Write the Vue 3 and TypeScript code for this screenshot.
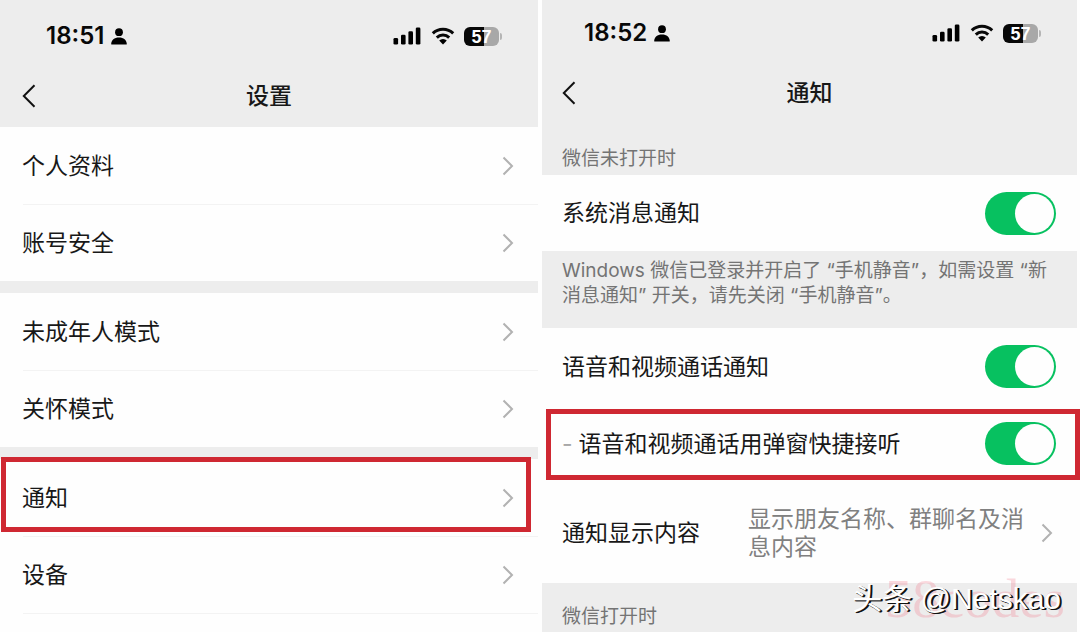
<script setup lang="ts">
import { ref } from 'vue'

interface SettingRow {
  label: string
  marked?: boolean
}

const groups: SettingRow[][] = [
  [{ label: '个人资料' }, { label: '账号安全' }],
  [{ label: '未成年人模式' }, { label: '关怀模式' }],
  [{ label: '通知', marked: true }, { label: '设备' }, { label: '' }],
]

const screens = [
  { id: 'settings', time: '18:51', title: '设置' },
  { id: 'notify', time: '18:52', title: '通知' },
]

const systemOn = ref(true)
const callOn = ref(true)
const popupOn = ref(true)
</script>

<template>
  <main class="board">
    <section v-for="s in screens" :key="s.id" class="phone" :class="s.id">
      <header class="top">
        <div class="status">
          <span class="time">{{ s.time }}</span>
          <svg class="person" viewBox="0 0 16 17" aria-hidden="true">
            <circle cx="8" cy="4.2" r="3.9" />
            <path d="M0.2 16C0.2 12 3.4 9.4 8 9.4s7.8 2.6 7.8 6.6q0 .6-.6.6H.8q-.6 0-.6-.6z" />
          </svg>
          <svg class="signal" viewBox="0 0 28 18" aria-hidden="true">
            <rect x="0.5" y="11" width="4.6" height="6.5" rx="1.3" />
            <rect x="8" y="7.8" width="4.6" height="9.7" rx="1.3" />
            <rect x="15.4" y="4.2" width="4.6" height="13.3" rx="1.3" />
            <rect x="22.8" y="0.5" width="4.6" height="17" rx="1.3" />
          </svg>
          <svg class="wifi" viewBox="0 0 24 18" aria-hidden="true">
            <path class="arc" d="M1.8 6.4a14.6 14.6 0 0 1 20.4 0" />
            <path class="arc" d="M5.8 10.6a8.9 8.9 0 0 1 12.4 0" />
            <path d="M8.2 13.6a5.5 5.5 0 0 1 7.6 0L12 17.6z" />
          </svg>
          <span class="battery"><b class="level">57</b><i class="cap"></i></span>
        </div>
        <div class="nav">
          <button class="back" type="button" aria-label="返回">
            <svg viewBox="0 0 14 24" aria-hidden="true"><path d="M12.5 1.2L1.8 12l10.7 10.8" /></svg>
          </button>
          <h1>{{ s.title }}</h1>
        </div>
      </header>

      <template v-if="s.id === 'settings'">
        <ul v-for="(g, gi) in groups" :key="gi" class="group">
          <li v-for="(r, ri) in g" :key="ri" class="item">
            <button v-if="r.label" type="button" class="row">
              <span>{{ r.label }}</span>
              <svg class="chev" viewBox="0 0 12 20" aria-hidden="true"><path d="M1.5 1.5L10 10l-8.5 8.5" /></svg>
            </button>
            <span v-if="r.marked" class="mark"></span>
          </li>
        </ul>
      </template>

      <template v-else>
        <h2 class="caption">微信未打开时</h2>
        <label class="row">
          <span>系统消息通知</span>
          <input v-model="systemOn" class="switch" type="checkbox" role="switch" />
        </label>
        <p class="note">Windows 微信已登录并开启了 “手机静音”，如需设置 “新消息通知” 开关，请先关闭 “手机静音”。</p>
        <label class="row">
          <span>语音和视频通话通知</span>
          <input v-model="callOn" class="switch" type="checkbox" role="switch" />
        </label>
        <label class="row">
          <span><span class="dash">-</span>语音和视频通话用弹窗快捷接听</span>
          <input v-model="popupOn" class="switch" type="checkbox" role="switch" />
          <span class="mark"></span>
        </label>
        <button type="button" class="row tall">
          <span>通知显示内容</span>
          <span class="value">显示朋友名称、群聊名及消息内容</span>
          <svg class="chev" viewBox="0 0 12 20" aria-hidden="true"><path d="M1.5 1.5L10 10l-8.5 8.5" /></svg>
        </button>
        <h2 class="caption last">微信打开时</h2>
      </template>
    </section>
    <div class="stamp">58codes</div>
    <div class="credit">头条 @Netskao</div>
  </main>
</template>

<style>
body {
  margin: 0;
  background: #fefefe;
}
</style>

<style scoped>
.board {
  position: relative;
  display: grid;
  grid-template-columns: 538fr 535fr;
  column-gap: 4px;
  padding-right: 3px;
  height: 100vh;
  overflow: hidden;
  background: #fefefe;
  color: #181818;
  font-family: Inter, "Noto Sans CJK SC", sans-serif;
}
.phone {
  min-width: 0;
  background: #ededed;
}
.top {
  box-sizing: border-box;
  height: 127px;
  padding-top: 20px;
}
.notify .top {
  padding-top: 17px;
}
.status {
  display: flex;
  align-items: center;
  height: 32px;
  padding: 0 36px 0 46px;
  color: #080808;
}
.notify .status {
  padding-left: 42px;
}
.time {
  font-size: 24px;
  font-weight: 600;
  line-height: 32px;
}
.person {
  width: 16px;
  height: 17px;
  margin: 0 auto 0 7px;
}
.signal {
  width: 28px;
  height: 18px;
}
.wifi {
  width: 24px;
  height: 18px;
  margin: 0 9px 0 10px;
}
.arc {
  fill: none;
  stroke: currentColor;
  stroke-width: 3;
}
.battery {
  position: relative;
  display: block;
  margin-right: 3px;
}
.level {
  display: block;
  width: 35px;
  height: 19px;
  border-radius: 6px;
  background: linear-gradient(90deg, #080808 57%, #a8a8a8 57%);
  color: #fff;
  font-family: "Liberation Sans", sans-serif;
  font-size: 18px;
  font-weight: 700;
  line-height: 20px;
  text-align: center;
}
.cap {
  position: absolute;
  top: 6px;
  right: -3px;
  width: 2px;
  height: 7px;
  border-radius: 0 2px 2px 0;
  background: #b5b5b5;
}
.nav {
  position: relative;
  display: flex;
  align-items: center;
  justify-content: center;
  height: 56px;
  margin-top: 16px;
}
h1 {
  margin: 0;
  font-size: 23px;
  font-weight: 500;
  line-height: 32px;
}
.back {
  position: absolute;
  left: 22px;
  padding: 0;
  border: 0;
  background: none;
}
.notify .back {
  left: 20px;
}
.back svg {
  display: block;
  width: 14px;
  height: 24px;
  fill: none;
  stroke: #111;
  stroke-width: 2;
}
.group {
  margin: 0 0 12px;
  padding: 0;
  list-style: none;
  background: #fefefe;
}
.item {
  position: relative;
  height: 77px;
}
.item + .item::before {
  content: "";
  position: absolute;
  top: 0;
  left: 23px;
  right: 0;
  height: 1px;
  background: #f3f3f3;
}
.row {
  position: relative;
  display: flex;
  align-items: center;
  justify-content: space-between;
  box-sizing: border-box;
  width: 100%;
  height: 77px;
  padding: 0 24px 0 22px;
  border: 0;
  background: #fefefe;
  color: inherit;
  font: inherit;
  font-size: 23px;
  line-height: 28px;
  text-align: left;
}
.item .row {
  background: none;
}
.notify .row {
  padding: 0 21px 0 20px;
}
.chev {
  flex: none;
  width: 12px;
  height: 20px;
  fill: none;
  stroke: #b2b2b2;
  stroke-width: 2;
}
.caption {
  box-sizing: border-box;
  height: 48px;
  margin: 0;
  padding: 18px 20px 0;
  color: #747474;
  font-size: 19px;
  font-weight: 400;
  line-height: 28px;
}
.caption + .row {
  height: 76px;
}
.last {
  padding-top: 20px;
}
.note {
  box-sizing: border-box;
  height: 77px;
  margin: 0;
  padding: 7px 20px 0;
  color: #747474;
  font-size: 19px;
  line-height: 25px;
}
.dash {
  margin-right: 6px;
  color: #a8a8a8;
}
.switch {
  flex: none;
  appearance: none;
  width: 71px;
  height: 43px;
  margin: 0;
  border-radius: 22px;
  background: #c8c8c8;
}
.switch::before {
  content: "";
  display: block;
  width: 39px;
  height: 39px;
  margin: 2px;
  border-radius: 50%;
  background: #fefefe;
}
.switch:checked {
  background: #07c160;
}
.switch:checked::before {
  margin-left: 30px;
}
.notify .tall {
  height: 101px;
  padding-right: 24px;
}
.value {
  flex: none;
  width: 280px;
  margin-left: auto;
  margin-right: 13px;
  color: #808080;
}
.mark {
  position: absolute;
  top: -2px;
  right: 7px;
  bottom: 4px;
  left: 1px;
  border: 5px solid #cf2832;
  pointer-events: none;
}
.notify .mark {
  top: 4px;
  right: -3px;
  bottom: 2px;
  left: 4px;
}
.stamp,
.credit {
  position: absolute;
  white-space: nowrap;
}
.stamp {
  right: 15px;
  bottom: 5px;
  color: rgba(240, 120, 135, 0.28);
  font-family: "Liberation Serif", serif;
  font-size: 55px;
  line-height: 56px;
}
.credit {
  right: 19px;
  bottom: 16px;
  color: #fff;
  font-family: "Liberation Sans", "Noto Sans CJK SC", sans-serif;
  font-size: 30px;
  line-height: 34px;
  text-shadow: 1px 1px 0 #111, 2px 1px 0 #111;
}
</style>
